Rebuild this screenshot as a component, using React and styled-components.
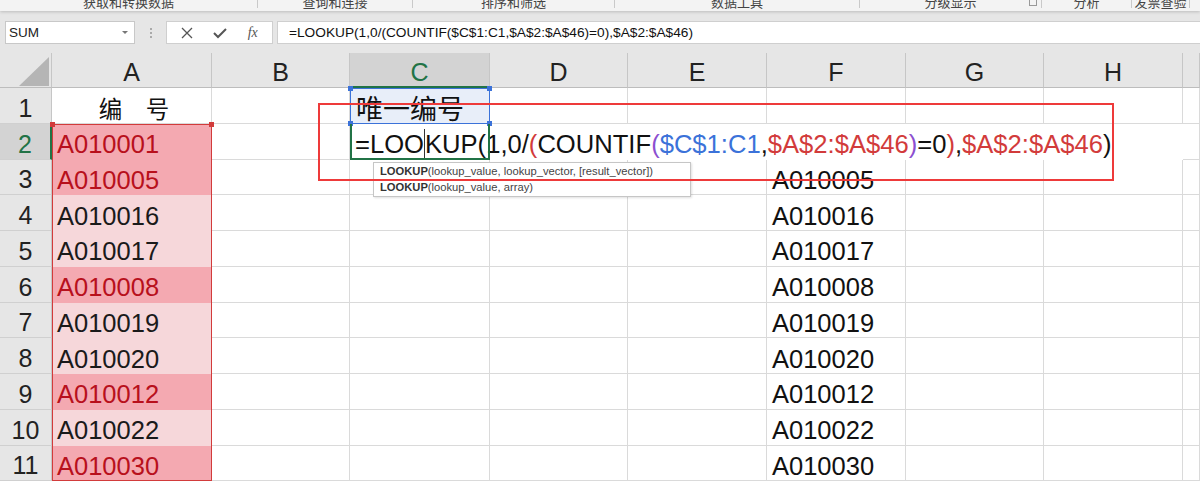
import React from 'react';
import styled, { createGlobalStyle } from 'styled-components';

const GlobalStyle = createGlobalStyle`
  html, body { margin: 0; padding: 0; background: #fff; }
  body {
    font-family: "Liberation Sans", "Noto Sans CJK SC", sans-serif;
    overflow: hidden;
  }
  * { box-sizing: border-box; }
`;

const Page = styled.div`
  width: 1200px;
  height: 481px;
  overflow: hidden;
  background: #fff;
`;

/* ribbon group labels, cut off at the top */
const RibbonStrip = styled.div`
  display: flex;
  height: 11px;
  background: #f3f3f3;
  overflow: hidden;
  position: relative;
  z-index: 2;
  box-shadow: 0 1px 3px rgba(0, 0, 0, 0.18);
`;

const RibbonGroup = styled.div`
  flex: none;
  width: ${p => p.$w}px;
  height: 8px;
  border-right: 1px solid #c9c9c9;
  display: flex;
  justify-content: center;
  position: relative;
`;

const RibbonLabel = styled.span`
  font-family: "Noto Sans CJK SC", sans-serif;
  font-size: 13px;
  line-height: 13px;
  margin-top: -5px;
  color: #444;
  white-space: nowrap;
`;

const Launcher = styled.span`
  position: absolute;
  right: 4px;
  top: -2px;
  width: 8px;
  height: 8px;
  border: 1px solid #999;
`;

const FormulaBar = styled.div`
  height: 42px;
  background: #e6e6e6;
  display: flex;
  align-items: flex-start;
  padding: 10px 0 0 5px;
`;

const NameBox = styled.div`
  width: 130px;
  height: 23px;
  background: #fff;
  border: 1px solid #c8c8c8;
  display: flex;
  align-items: center;
  justify-content: space-between;
  padding: 0 6px 0 3px;
  font-size: 13.5px;
  color: #222;
`;

const Caret = styled.span`
  width: 0;
  height: 0;
  border-left: 3px solid transparent;
  border-right: 3px solid transparent;
  border-top: 3px solid #777;
`;

const Grip = styled.div`
  width: 31px;
  height: 23px;
  display: flex;
  flex-direction: column;
  align-items: center;
  justify-content: center;
  gap: 2px;
  span {
    width: 2px;
    height: 2px;
    background: #aaa;
  }
`;

const FxButtons = styled.div`
  width: 107px;
  height: 23px;
  background: #fff;
  border: 1px solid #cfcfcf;
  display: flex;
  align-items: center;
  justify-content: space-around;
  padding: 0 4px;
  color: #555;
`;

const FxLabel = styled.span`
  font-family: "Liberation Serif", serif;
  font-style: italic;
  font-size: 14px;
  color: #555;
`;

const FormulaInput = styled.div`
  flex: 1;
  height: 23px;
  margin-left: 4px;
  background: #fff;
  border: 1px solid #cfcfcf;
  border-right: none;
  display: flex;
  align-items: center;
  padding-left: 11px;
  font-size: 13.7px;
  color: #111;
  white-space: nowrap;
`;

const Sheet = styled.div`
  position: relative;
  display: grid;
  grid-template-columns: 52px 160px 138px 140px 138px 139px 139px 138px 139px 1fr;
  grid-template-rows: 35px repeat(11, 35.75px);
  background: #fff;
`;

const ColHead = styled.div`
  grid-row: 1;
  grid-column: ${p => p.$col};
  background: ${p => (p.$active ? '#d3d3d3' : '#e6e6e6')};
  border-right: 1px solid #c6c6c6;
  border-bottom: ${p => (p.$active ? '2px solid #217346' : '1px solid #bdbdbd')};
  display: flex;
  align-items: center;
  justify-content: center;
  padding-top: 5px;
  font-size: 25px;
  color: ${p => (p.$active ? '#217346' : '#222')};
`;

const Corner = styled(ColHead)`
  position: relative;
  svg { position: absolute; right: 2px; bottom: 1px; }
`;

const RowHead = styled.div`
  grid-column: 1;
  grid-row: ${p => p.$row};
  background: ${p => (p.$active ? '#d3d3d3' : '#e6e6e6')};
  border-right: ${p => (p.$active ? '2px solid #217346' : '1px solid #c6c6c6')};
  border-bottom: 1px solid #d0d0d0;
  display: flex;
  align-items: center;
  justify-content: center;
  padding-top: 6px;
  font-size: 25px;
  color: ${p => (p.$active ? '#217346' : '#222')};
`;

const fills = {
  dup: { bg: '#f4a9b1', fg: '#b8101c' },
  uniq: { bg: '#f6d7da', fg: '#1a1a1a' },
};

const Cell = styled.div`
  grid-column: ${p => p.$col};
  grid-row: ${p => p.$row};
  background: ${p => (p.$fill ? fills[p.$fill].bg : '#fff')};
  color: ${p => (p.$fill ? fills[p.$fill].fg : '#111')};
  border-right: 1px solid ${p => (p.$fill ? 'transparent' : '#dadada')};
  border-bottom: 1px solid ${p => (p.$fill ? 'transparent' : '#dadada')};
  display: flex;
  align-items: center;
  justify-content: ${p => (p.$center ? 'center' : 'flex-start')};
  padding: 7px 0 0 5px;
  font-size: 25.5px;
  white-space: nowrap;
  overflow: hidden;
`;

const CjkText = styled.span`
  font-family: "Noto Sans CJK SC", sans-serif;
  font-size: ${p => p.$size}px;
  line-height: 1;
  color: #111;
`;

const RefBox = styled.div`
  grid-column: ${p => p.$col};
  grid-row: ${p => p.$row};
  position: relative;
  z-index: 3;
  border: 1px solid ${p => p.$color};
  background: ${p => p.$bg || 'transparent'};
  display: flex;
  align-items: center;
  padding: 3px 0 0 5px;
`;

const Handle = styled.span`
  position: absolute;
  width: 5px;
  height: 5px;
  background: ${p => p.$color};
  ${p => (p.$top ? 'top: -3px;' : 'bottom: -3px;')}
  ${p => (p.$left ? 'left: -3px;' : 'right: -3px;')}
`;

const EditSpill = styled.div`
  grid-column: 4 / 10;
  grid-row: 3;
  z-index: 2;
  background: #fff;
  display: flex;
  align-items: center;
  padding: 5px 0 0 5px;
  font-size: 25.6px;
  color: #111;
  white-space: nowrap;
`;

const EditBox = styled.div`
  grid-column: 4;
  grid-row: 3;
  z-index: 4;
  border: 2px solid #217346;
  border-top: none;
  pointer-events: none;
`;

const Cursor = styled.span`
  display: inline-block;
  width: 1px;
  height: 31px;
  background: #333;
  vertical-align: -7px;
`;

const Tok = styled.span`
  color: ${p => p.$c};
`;

const Tooltip = styled.div`
  position: absolute;
  left: 373px;
  top: 109px;
  width: 318px;
  height: 35px;
  z-index: 5;
  background: #fff;
  border: 1px solid #c6c6c6;
  box-shadow: 1px 1px 2px rgba(0, 0, 0, 0.12);
  padding: 1px 0 0 6px;
  font-size: 11.2px;
  line-height: 15.5px;
  color: #444;
  b { font-weight: bold; color: #333; }
`;

const Annotation = styled.div`
  position: absolute;
  left: 318px;
  top: 50px;
  width: 796px;
  height: 78px;
  z-index: 6;
  border: 2px solid #ee3a3a;
  pointer-events: none;
`;

const ribbon = [
  { w: 258, t: '获取和转换数据' },
  { w: 155, t: '查询和连接' },
  { w: 202, t: '排序和筛选' },
  { w: 245, t: '数据工具' },
  { w: 182, t: '分级显示', launcher: true },
  { w: 90, t: '分析' },
  { w: 58, t: '发票查验' },
];

const letters = ['A', 'B', 'C', 'D', 'E', 'F', 'G', 'H', ''];

const colA = ['A010001', 'A010005', 'A010016', 'A010017', 'A010008', 'A010019', 'A010020', 'A010012', 'A010022', 'A010030'];
const dupRows = [2, 3, 6, 9, 11];
const colF = ['A010005', 'A010016', 'A010017', 'A010008', 'A010019', 'A010020', 'A010012', 'A010022', 'A010030'];

const RED = '#d23b3b';
const BLUE = '#3b72d9';
const PURPLE = '#8c4fd0';

const App = () => {
  return (
    <Page>
      <GlobalStyle />
      <RibbonStrip>
        {ribbon.map(g => (
          <RibbonGroup key={g.t} $w={g.w}>
            <RibbonLabel>{g.t}</RibbonLabel>
            {g.launcher && <Launcher />}
          </RibbonGroup>
        ))}
      </RibbonStrip>

      <FormulaBar>
        <NameBox>
          SUM
          <Caret />
        </NameBox>
        <Grip><span /><span /><span /></Grip>
        <FxButtons>
          <svg width="12" height="12" viewBox="0 0 12 12">
            <path d="M1 1 L11 11 M11 1 L1 11" stroke="#555" strokeWidth="1.3" fill="none" />
          </svg>
          <svg width="14" height="12" viewBox="0 0 14 12">
            <path d="M1 6 L5 10 L13 2" stroke="#555" strokeWidth="2" fill="none" />
          </svg>
          <FxLabel>fx</FxLabel>
        </FxButtons>
        <FormulaInput>=LOOKUP(1,0/(COUNTIF($C$1:C1,$A$2:$A$46)=0),$A$2:$A$46)</FormulaInput>
      </FormulaBar>

      <Sheet>
        <Corner $col={1}>
          <svg width="30" height="29" viewBox="0 0 30 29">
            <polygon points="30,0 30,29 0,29" fill="#b5b5b5" />
          </svg>
        </Corner>
        {letters.map((l, i) => (
          <ColHead key={i} $col={i + 2} $active={l === 'C'}>{l}</ColHead>
        ))}

        {Array.from({ length: 11 }, (_, r) => {
          const row = r + 2;
          const n = r + 1;
          return (
            <React.Fragment key={row}>
              <RowHead $row={row} $active={n === 2}>{n}</RowHead>
              {letters.map((l, c) => {
                const col = c + 2;
                if (n === 1 && l === 'A') {
                  return (
                    <Cell key={col} $col={col} $row={row} $center>
                      <CjkText $size={23.5}>编　号</CjkText>
                    </Cell>
                  );
                }
                if (l === 'A' && n > 1) {
                  const fill = dupRows.includes(n) ? 'dup' : 'uniq';
                  return <Cell key={col} $col={col} $row={row} $fill={fill}>{colA[n - 2]}</Cell>;
                }
                if (l === 'F' && n > 2) {
                  return <Cell key={col} $col={col} $row={row}>{colF[n - 3]}</Cell>;
                }
                return <Cell key={col} $col={col} $row={row} />;
              })}
            </React.Fragment>
          );
        })}

        <RefBox $col={4} $row={2} $color={BLUE} $bg="#e8eef9">
          <CjkText $size={27}>唯一编号</CjkText>
          <Handle $color={BLUE} $top $left />
          <Handle $color={BLUE} $top />
          <Handle $color={BLUE} $left />
          <Handle $color={BLUE} />
        </RefBox>

        <RefBox $col={2} $row="3 / 13" $color={RED}>
          <Handle $color={RED} $top $left />
          <Handle $color={RED} $top />
        </RefBox>

        <EditSpill>
          <span>
            =LOO<Cursor />KUP(1,0/<Tok $c={RED}>(</Tok>COUNTIF<Tok $c={PURPLE}>(</Tok>
            <Tok $c={BLUE}>$C$1:C1</Tok>,<Tok $c={RED}>$A$2:$A$46</Tok><Tok $c={PURPLE}>)</Tok>=0
            <Tok $c={RED}>)</Tok>,<Tok $c={RED}>$A$2:$A$46</Tok>)
          </span>
        </EditSpill>
        <EditBox />

        <Tooltip>
          <div><b>LOOKUP</b>(lookup_value, lookup_vector, [result_vector])</div>
          <div><b>LOOKUP</b>(lookup_value, array)</div>
        </Tooltip>

        <Annotation />
      </Sheet>
    </Page>
  );
};

export default App;
